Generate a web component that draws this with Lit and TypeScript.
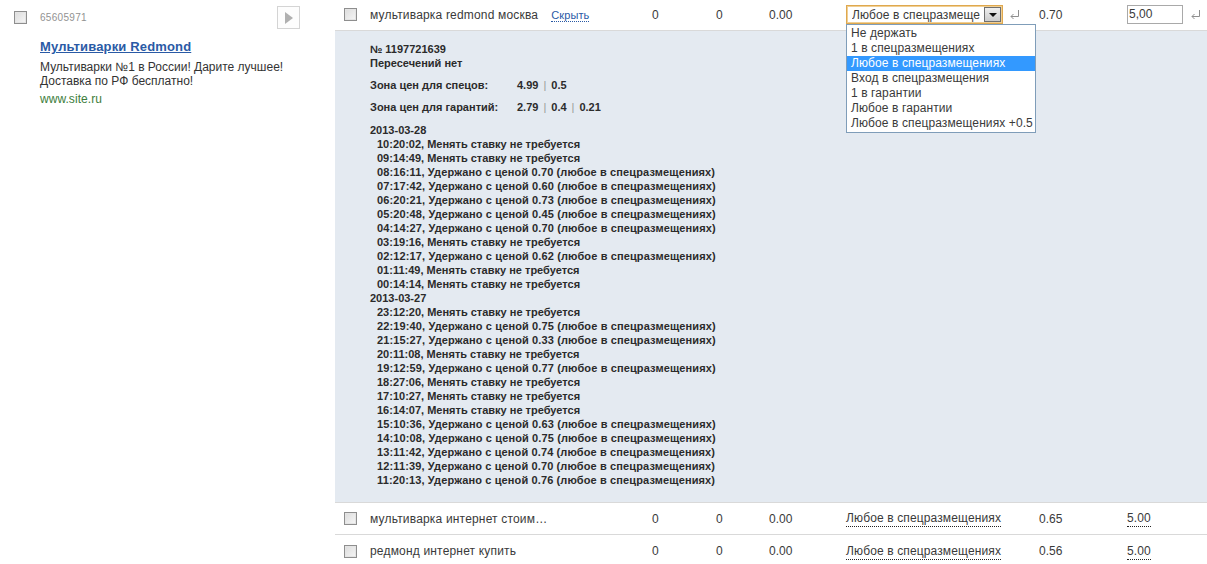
import { LitElement, html, css, svg } from "lit";
import { customElement } from "lit/decorators.js";

const NO = "Менять ставку не требуется";
const KEEP = (p: string) => `Удержано с ценой ${p} (любое в спецразмещениях)`;

const day1: [string, string][] = [
  ["10:20:02", NO], ["09:14:49", NO], ["08:16:11", KEEP("0.70")], ["07:17:42", KEEP("0.60")],
  ["06:20:21", KEEP("0.73")], ["05:20:48", KEEP("0.45")], ["04:14:27", KEEP("0.70")], ["03:19:16", NO],
  ["02:12:17", KEEP("0.62")], ["01:11:49", NO], ["00:14:14", NO],
];
const day2: [string, string][] = [
  ["23:12:20", NO], ["22:19:40", KEEP("0.75")], ["21:15:27", KEEP("0.33")], ["20:11:08", NO],
  ["19:12:59", KEEP("0.77")], ["18:27:06", NO], ["17:10:27", NO], ["16:14:07", NO],
  ["15:10:36", KEEP("0.63")], ["14:10:08", KEEP("0.75")], ["13:11:42", KEEP("0.74")],
  ["12:11:39", KEEP("0.70")], ["11:20:13", KEEP("0.76")],
];
const options = ["Не держать", "1 в спецразмещениях", "Любое в спецразмещениях", "Вход в спецразмещения", "1 в гарантии", "Любое в гарантии", "Любое в спецразмещениях +0.5"];

const enter = svg`<path d="M9.5 1v6.5H2M4.5 5 2 7.5 4.5 10" fill="none" stroke="#8f8f8f" stroke-width="1"/>`;

@customElement("app-root")
export class AppRoot extends LitElement {
  static styles = css`
    :host { display: block; width: 1207px; height: 564px; overflow: hidden; background: #fff; font: 12px/14px "Liberation Sans", Arial, sans-serif; color: #3a3a3a; }
    .page { display: flex; align-items: flex-start; }
    .ad { width: 335px; flex: none; box-sizing: border-box; padding: 6px 35px 0 14px; }
    .ad-top { display: flex; align-items: center; height: 23px; }
    .num { margin-left: 13px; font-size: 10px; letter-spacing: .3px; color: #929292; flex: 1; }
    .play { width: 21px; height: 21px; border: 1px solid #d4d4d4; display: flex; align-items: center; justify-content: center; background: #fdfdfd; }
    .ad-body { padding: 10px 0 0 26px; }
    .title { display: block; font-size: 13px; line-height: 15px; font-weight: bold; color: #2a5aa5; text-decoration: underline; margin-bottom: 7px; letter-spacing: .15px; }
    .desc { color: #333; line-height: 13.5px; }
    .url { color: #3c7d3a; margin-top: 4px; letter-spacing: .05px; }
    .main { flex: 1; min-width: 0; }
    .row { position: relative; display: grid; grid-template-columns: 26px 282px 64px 53px 77px 193px 88px 1fr; align-items: center; height: 31px; padding-left: 9px; box-sizing: border-box; border-bottom: 1px solid #d9d9d9; }
    .row.first { padding-bottom: 1px; }
    .row.second { height: 32px; }
    .row.last { border-bottom: none; height: 32px; }
    .cb { width: 11px; height: 11px; border: 1px solid #8e8e8e; background: linear-gradient(135deg, #dcdcdc, #f6f6f6); box-shadow: inset 0 0 0 1px #e4e4e4; }
    .name { display: flex; gap: 13px; white-space: nowrap; letter-spacing: .18px; }
    .hide { color: #2a5aa5; font-size: 11px; letter-spacing: .1px; border-bottom: 1px dotted #2a5aa5; line-height: 12px; padding-top: 1px; }
    .dotted { justify-self: start; margin-top: 2px; border-bottom: 1px dotted #222; line-height: 13px; padding-bottom: 1px; letter-spacing: .13px; }
    .cell-sel { display: flex; align-items: center; gap: 6px; }
    .select { width: 157px; height: 19px; box-sizing: border-box; border: 1px solid #dfa84e; outline: 1px solid #f0cf94; outline-offset: -2px; display: flex; align-items: center; padding: 1px 1px 1px 5px; white-space: nowrap; overflow: hidden; justify-content: space-between; letter-spacing: .1px; }
    .arrow { flex: none; width: 17px; height: 15px; box-sizing: border-box; border: 1px solid #6f6f6f; background: linear-gradient(#efefef, #cccccc); display: flex; align-items: center; justify-content: center; }
    .tri { width: 0; height: 0; border: 4px solid transparent; border-top-color: #111; border-bottom: 0; }
    .seltext { overflow: hidden; width: 131px; }
    .cell-in { display: flex; align-items: center; gap: 7px; }
    .input { width: 56px; height: 19px; box-sizing: border-box; border: 1px solid #a9a9a9; padding-left: 1px; line-height: 17px; }
    .list { position: absolute; left: 511px; top: 24px; width: 190px; box-sizing: border-box; border: 1px solid #7f9db9; background: #fff; z-index: 2; padding: 1px 0; letter-spacing: .1px; }
    .opt { height: 15px; line-height: 15px; padding-left: 4px; white-space: nowrap; }
    .opt.on { background: #3399ff; color: #fff; }
    .panel { background: #e4eaf1; padding: 11px 0 15px 35px; border-bottom: 1px solid #d9d9d9; font-size: 11px; font-weight: bold; color: #2b2b2b; height: 472px; box-sizing: border-box; }
    .zone { display: grid; grid-template-columns: 147px auto; margin-top: 8px; }
    .sep { font-weight: normal; color: #9a9a9a; margin: 0 5px; }
    .dates { margin-top: 9px; }
    .line { padding-left: 7px; white-space: nowrap; }
    .line.keep { letter-spacing: .125px; }
  `;

  private lines(items: [string, string][]) {
    return items.map(([t, m]) => html`<div class="line ${m === NO ? "" : "keep"}">${t}, ${m}</div>`);
  }

  private bare(name: string, bid: string, cls: string) {
    return html`<div class="row ${cls}">
      <div class="cb"></div>
      <div class="name">${name}</div>
      <div>0</div><div>0</div><div>0.00</div>
      <div class="dotted">Любое в спецразмещениях</div>
      <div>${bid}</div>
      <div class="dotted">5.00</div>
    </div>`;
  }

  render() {
    return html`<div class="page">
      <div class="ad">
        <div class="ad-top">
          <div class="cb"></div>
          <div class="num">65605971</div>
          <div class="play"><svg width="8" height="12" viewBox="0 0 8 12"><path d="M0 0l8 6-8 6z" fill="#b0b0b0"/></svg></div>
        </div>
        <div class="ad-body">
          <a class="title">Мультиварки Redmond</a>
          <div class="desc">Мультиварки №1 в России! Дарите лучшее!<br />Доставка по РФ бесплатно!</div>
          <div class="url">www.site.ru</div>
        </div>
      </div>
      <div class="main">
        <div class="row first">
          <div class="cb"></div>
          <div class="name"><span>мультиварка redmond москва</span><span class="hide">Скрыть</span></div>
          <div>0</div><div>0</div><div>0.00</div>
          <div class="cell-sel">
            <div class="select"><span class="seltext">Любое в спецразмеще</span><span class="arrow"><span class="tri"></span></span></div>
            <svg width="12" height="12" viewBox="0 0 12 12">${enter}</svg>
          </div>
          <div>0.70</div>
          <div class="cell-in"><div class="input">5,00</div><svg width="12" height="12" viewBox="0 0 12 12">${enter}</svg></div>
          <div class="list">${options.map((o, i) => html`<div class="opt ${i === 2 ? "on" : ""}">${o}</div>`)}</div>
        </div>
        <div class="panel">
          <div>№ 1197721639</div>
          <div>Пересечений нет</div>
          <div class="zone"><div>Зона цен для спецов:</div><div>4.99<span class="sep">|</span>0.5</div></div>
          <div class="zone"><div>Зона цен для гарантий:</div><div>2.79<span class="sep">|</span>0.4<span class="sep">|</span>0.21</div></div>
          <div class="dates">
            <div>2013-03-28</div>
            ${this.lines(day1)}
            <div>2013-03-27</div>
            ${this.lines(day2)}
          </div>
        </div>
        ${this.bare("мультиварка интернет стоим…", "0.65", "second")}
        ${this.bare("редмонд интернет купить", "0.56", "last")}
      </div>
    </div>`;
  }
}
